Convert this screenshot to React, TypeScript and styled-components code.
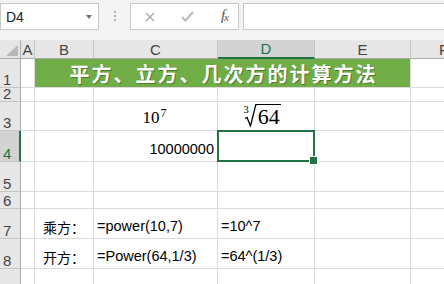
import React from 'react';
import styled, { createGlobalStyle } from 'styled-components';

const GlobalStyle = createGlobalStyle`
  html, body {
    margin: 0;
    padding: 0;
    background: #ffffff;
    overflow: hidden;
  }
  * {
    box-sizing: border-box;
  }
`;

const Window = styled.div`
  width: 444px;
  height: 284px;
  overflow: hidden;
  background: #ffffff;
  font-family: "Liberation Sans", Arial, sans-serif;
`;

/* formula bar */
const Toolbar = styled.div`
  height: 40px;
  background: #f3f3f3;
  display: flex;
  align-items: flex-start;
  padding-top: 3px;
`;

const Box = styled.div`
  height: 27px;
  background: #ffffff;
  border: 1px solid #c9c9c9;
  display: flex;
  align-items: center;
`;

const NameBox = styled(Box)`
  width: 99px;
  padding: 0 6px 0 5px;
  justify-content: space-between;
  font-size: 14px;
  color: #222222;
`;

const DropArrow = styled.span`
  width: 0;
  height: 0;
  border-left: 3.5px solid transparent;
  border-right: 3.5px solid transparent;
  border-top: 4px solid #707070;
`;

const Grip = styled.div`
  width: 31px;
  height: 27px;
  display: flex;
  flex-direction: column;
  align-items: center;
  justify-content: center;
  gap: 2px;
  padding-bottom: 2px;
`;

const GripDot = styled.span`
  width: 2px;
  height: 2px;
  background: #b0b0b0;
`;

const ButtonBox = styled(Box)`
  width: 109px;
  padding: 0 10px 0 14px;
  justify-content: space-between;
`;

const Fx = styled.span`
  font-family: "Liberation Serif", "Times New Roman", serif;
  font-style: italic;
  font-size: 15px;
  color: #555555;
  letter-spacing: -1px;
  margin-top: -2px;

  sub {
    font-size: 11px;
    vertical-align: -1px;
  }
`;

const FormulaInput = styled(Box)`
  flex: 1;
  margin-left: 4px;
  margin-right: -4px;
`;

/* sheet */
const Sheet = styled.div`
  display: grid;
  grid-template-columns: 21px 14px 59px 124px 97px 96px 66px;
  grid-template-rows: 19px 29px 14px 29px 31px 30px 17px 30px 30px 30px;
  width: 476px;
`;

const Corner = styled.div`
  background: #e6e6e6;
  border-right: 1px solid #ababab;
  border-bottom: 1px solid #ababab;
  position: relative;

  &::after {
    content: '';
    position: absolute;
    right: 2px;
    bottom: 2px;
    width: 0;
    height: 0;
    border-left: 12px solid transparent;
    border-bottom: 11px solid #b7b7b7;
  }
`;

const ColHeader = styled.div<{ $active?: boolean }>`
  background: ${p => (p.$active ? '#d3d3d3' : '#e6e6e6')};
  border-right: 1px solid #c6c6c6;
  border-bottom: ${p => (p.$active ? '2px solid #217346' : '1px solid #ababab')};
  color: ${p => (p.$active ? '#217346' : '#444444')};
  font-size: 15px;
  line-height: 17px;
  display: flex;
  justify-content: center;
  align-items: flex-end;
  overflow: hidden;
`;

const RowHeader = styled.div<{ $active?: boolean }>`
  background: ${p => (p.$active ? '#d3d3d3' : '#e6e6e6')};
  border-right: ${p => (p.$active ? '2px solid #217346' : '1px solid #ababab')};
  border-bottom: 1px solid #c6c6c6;
  color: ${p => (p.$active ? '#217346' : '#444444')};
  font-size: 15px;
  line-height: 12px;
  display: flex;
  align-items: flex-end;
  padding: 0 0 1px 3px;
`;

const Cell = styled.div<{ $align?: 'left' | 'center' | 'right' }>`
  border-right: 1px solid #dadada;
  border-bottom: 1px solid #dadada;
  display: flex;
  align-items: flex-end;
  justify-content: ${p =>
    p.$align === 'right' ? 'flex-end' : p.$align === 'center' ? 'center' : 'flex-start'};
  padding: 0 3px 5px 3px;
  font-size: 14.5px;
  line-height: 14px;
  color: #000000;
  white-space: nowrap;
`;

const LabelCell = styled(Cell)`
  font-family: "Noto Sans CJK SC", sans-serif;
  font-size: 14px;
  padding-bottom: 4px;
`;

const SelectedCell = styled(Cell)`
  position: relative;
  margin: -1px 0 0 -1px;
  border: 2px solid #217346;

  &::after {
    content: '';
    position: absolute;
    right: -5px;
    bottom: -5px;
    width: 7px;
    height: 7px;
    background: #217346;
    border: 1px solid #ffffff;
  }
`;

const TitleCell = styled.div`
  grid-column: 3 / 7;
  background: #70ad47;
  border-right: 1px solid #dadada;
  border-bottom: 1px solid #dadada;
  display: flex;
  align-items: center;
  justify-content: center;
  padding-left: 2px;
  color: #ffffff;
  font-family: "Noto Sans CJK SC", sans-serif;
  font-weight: 700;
  font-size: 20px;
  letter-spacing: 2px;
  text-shadow: 1px 1px 0 rgba(40, 70, 20, 0.5);
`;

const MathCell = styled(Cell)`
  font-family: "Liberation Serif", "Times New Roman", serif;
  padding-bottom: 3px;
`;

const Power = styled.span`
  font-size: 17px;
  line-height: 17px;
  margin-right: 2px;
  margin-bottom: 1px;

  sup {
    font-size: 12px;
    vertical-align: 6px;
    margin-left: 1px;
  }
`;

const Root = styled.span`
  display: inline-flex;
  align-items: flex-start;
  margin-right: 8px;
`;

const RootIndex = styled.span`
  font-size: 10.5px;
  line-height: 10px;
  margin-top: 1px;
  margin-right: -5px;
`;

const Radicand = styled.span`
  font-size: 22px;
  line-height: 21px;
  border-top: 1.4px solid #000000;
  padding: 1px 1px 0 1px;
`;

const RadicalSign = () => (
  <svg width="13" height="23" viewBox="0 0 13 23">
    <path d="M1 14.5 L3 13.5 L6.5 22 L11.8 0.7 L13 0.7" fill="none" stroke="#000" strokeWidth="1.3" />
  </svg>
);

const CrossIcon = () => (
  <svg width="10" height="10" viewBox="0 0 10 10">
    <path d="M1 1 L9 9 M9 1 L1 9" stroke="#a9a9a9" strokeWidth="1.4" />
  </svg>
);

const CheckIcon = () => (
  <svg width="13" height="11" viewBox="0 0 13 11">
    <path d="M1 6 L4.5 9.5 L12 1" fill="none" stroke="#b9b9b9" strokeWidth="2" />
  </svg>
);

const COLS = ['A', 'B', 'C', 'D', 'E', 'F'];
const ROWS = [1, 2, 3, 4, 5, 6, 7, 8, 9];

const App: React.FC = () => {
  const renderCell = (col: string, row: number) => {
    const key = `${col}${row}`;
    switch (key) {
      case 'C3':
        return (
          <MathCell key={key} $align="center">
            <Power>
              10<sup>7</sup>
            </Power>
          </MathCell>
        );
      case 'D3':
        return (
          <MathCell key={key} $align="center">
            <Root>
              <RootIndex>3</RootIndex>
              <RadicalSign />
              <Radicand>64</Radicand>
            </Root>
          </MathCell>
        );
      case 'C4':
        return (
          <Cell key={key} $align="right">
            10000000
          </Cell>
        );
      case 'D4':
        return <SelectedCell key={key} />;
      case 'B7':
        return (
          <LabelCell key={key} $align="center">
            乘方：
          </LabelCell>
        );
      case 'B8':
        return (
          <LabelCell key={key} $align="center">
            开方：
          </LabelCell>
        );
      case 'C7':
        return <Cell key={key}>=power(10,7)</Cell>;
      case 'C8':
        return <Cell key={key}>=Power(64,1/3)</Cell>;
      case 'D7':
        return <Cell key={key}>=10^7</Cell>;
      case 'D8':
        return <Cell key={key}>=64^(1/3)</Cell>;
      default:
        return <Cell key={key} />;
    }
  };

  return (
    <Window>
      <GlobalStyle />
      <Toolbar>
        <NameBox>
          <span>D4</span>
          <DropArrow />
        </NameBox>
        <Grip>
          <GripDot />
          <GripDot />
          <GripDot />
        </Grip>
        <ButtonBox>
          <CrossIcon />
          <CheckIcon />
          <Fx>
            f<sub>x</sub>
          </Fx>
        </ButtonBox>
        <FormulaInput />
      </Toolbar>
      <Sheet>
        <Corner />
        {COLS.map(c => (
          <ColHeader key={c} $active={c === 'D'}>
            {c}
          </ColHeader>
        ))}
        {ROWS.map(r => (
          <React.Fragment key={r}>
            <RowHeader $active={r === 4}>{r}</RowHeader>
            {r === 1 ? (
              <>
                <Cell />
                <TitleCell>平方、立方、几次方的计算方法</TitleCell>
                <Cell />
              </>
            ) : (
              COLS.map(c => renderCell(c, r))
            )}
          </React.Fragment>
        ))}
      </Sheet>
    </Window>
  );
};

export default App;
